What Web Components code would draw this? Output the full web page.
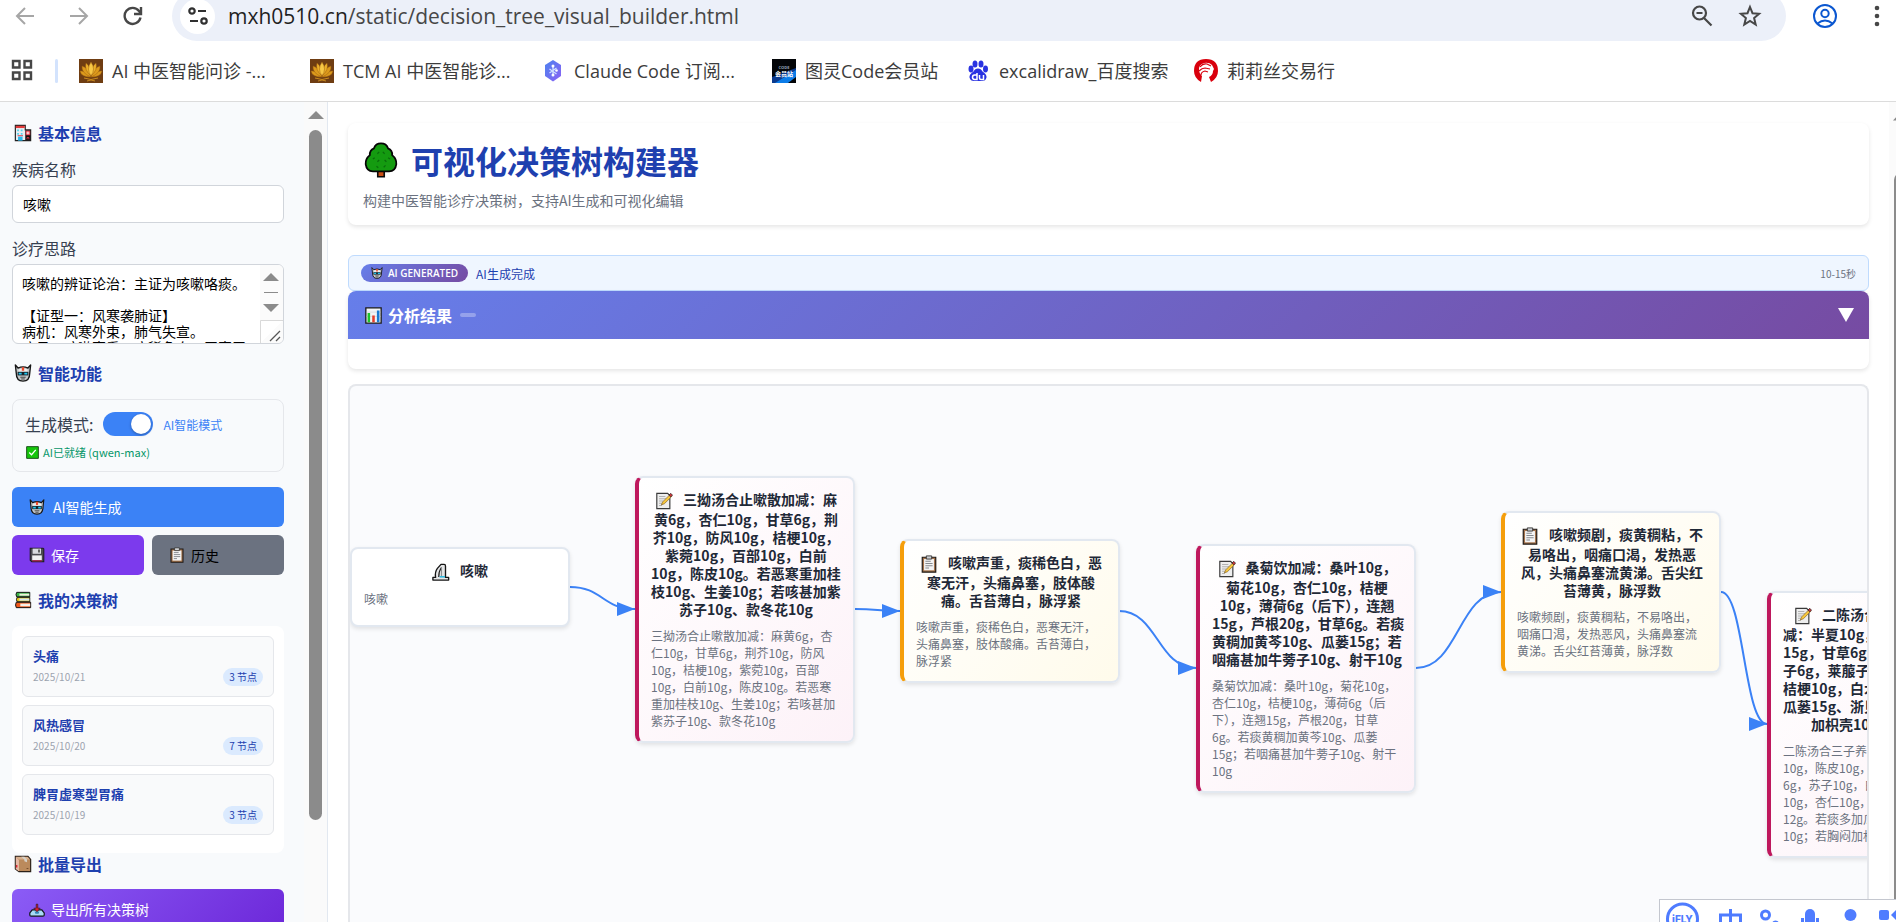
<!DOCTYPE html>
<html lang="zh-CN">
<head>
<meta charset="utf-8">
<title>可视化决策树构建器</title>
<style>
html,body{margin:0;height:100%}
body{font-family:"Noto Sans CJK SC",sans-serif;font-size:14px;background:#fff;color:#1f2937;overflow:hidden}
</style>
</head>
<body>
<app-root></app-root>
<script>
const define = (name, html, setup) => {
  const tpl = document.createElement('template');
  tpl.innerHTML = `<style>*{box-sizing:border-box}:host{display:block;box-sizing:border-box}</style>` + html;
  customElements.define(name, class extends HTMLElement {
    constructor() {
      super();
      this.attachShadow({mode: 'open'}).append(tpl.content.cloneNode(true));
    }
    connectedCallback() { if (setup && !this.ready) { this.ready = true; setup(this, this.shadowRoot); } }
  });
};

/* Icon set, each drawn on a 20 x 20 grid */
const ICONS = {
  hospital: `<path d="M1.500 1.500h11v5h6v12h-17z" fill="#e9eef2" stroke="#222" stroke-width="1.300"/><path d="M2 2h10v2.500h-10z" fill="#e23b3b"/><path d="M12.500 7h5.800v11h-5.800z" fill="#111"/><path d="M13 7.500h5v5h-5z" fill="#e23b4b"/><path d="M15.500 8.300v3.400M13.800 10h3.400" stroke="#fff"/><path d="M3.500 6h2v2h-2zM7.500 6h2v2h-2zM3.500 10h2v2h-2zM7.500 10h2v2h-2z" fill="#55d3ee"/><path d="M4.500 14h5v4.500h-5z" fill="#25b8ed"/><path d="M4 13h6M14.500 17v-2h2v2" stroke="#d34" fill="none"/>`,
  robot: `<path d="M1.500 1l3 3.500q5.500-2.500 11 0l3-3.500-1 9q0 9-7.500 9t-7.500-9z" fill="#c3c7c9" stroke="#161616" stroke-width="1.500" stroke-linejoin="round"/><path d="M5 6q5-2 10 0v2.500H5z" fill="#eceded"/><path d="M8.700 3.500h2.600v4h-2.600z" fill="#f04a2c"/><path d="M4 8.700h12v4H4z" fill="#15232b"/><path d="M5.200 9.600h3.300v2.200H5.200zM11.500 9.600h3.300v2.200h-3.300z" fill="#20c8f2"/><path d="M7 14.700h6M8 16.600h4" stroke="#333"/>`,
  check: `<path d="M1 1h18v18h-18z" fill="#16c60c" stroke="#1a4f1a" stroke-width="1.500"/><path d="M5 10l3.500 3.500 6.500-7.500" fill="none" stroke="#fff" stroke-width="2"/>`,
  floppy: `<path d="M1.500 1.500h16l1 1v16h-15l-2-2z" fill="#4b4b50" stroke="#1d1d1d" stroke-width="1.300"/><path d="M4.500 2h10.500v6.500h-10.500z" fill="#d8dade"/><path d="M11.500 3h2v4h-2z" fill="#444"/><path d="M4 10.500h12v6h-12z" fill="#f1f1f1"/><path d="M4 16.500h12v1.500h-12z" fill="#b3204d"/>`,
  clipboard: `<path d="M2.500 2.500h15v16.500h-15z" fill="#a5744c" stroke="#1f1a17" stroke-width="1.300"/><path d="M4.500 4.500h11v12.500h-11z" fill="#f4f4f4"/><path d="M7 1h6v3.500h-6z" fill="#cfd1d4" stroke="#333"/><path d="M6 7h6M6 9.500h8M6 12h8M6 14.500h4" stroke="#85898e" stroke-width="1.200"/>`,
  books: `<path d="M3 1.500h14.500v5h-14.500q-1.500-2.500 0-5z" fill="#39b54a" stroke="#111" stroke-width="1.100"/><path d="M6 3h11v2.200h-11z" fill="#f2efdc"/><path d="M3.500 7h14v5h-14q-1.500-2.500 0-5z" fill="#e2c71b" stroke="#111" stroke-width="1.100"/><path d="M6 8.300h11v2.400h-11z" fill="#d5e8f3"/><path d="M2.500 12.500h16v6h-16q-1.500-3 0-6z" fill="#f0581a" stroke="#111" stroke-width="1.100"/><path d="M7 14h11v3h-11z" fill="#f5f0e8"/>`,
  box: `<path d="M1.500 1.500h14l3 3.500v13.500h-13l-4-3z" fill="#bb8a5c" stroke="#2a2019" stroke-width="1.300"/><path d="M2 2h13l3 3h-12.500z" fill="#d9b18e"/><path d="M2 2l3.500 3.500v12.500l-3.500-2.500z" fill="#e5b9a4"/><path d="M8 2h3.500l3 3v3l-3-1v-2z" fill="#d7d2c9"/><path d="M3 11v3" stroke="#d23" stroke-width="1.500"/><path d="M14 15h2" stroke="#6d4828"/>`,
  inbox: `<path d="M4 11h12l3 4v2.500q0 1.500-1.500 1.500h-15q-1.500 0-1.500-1.500v-2.500z" fill="#a9dcf5" stroke="#10151a" stroke-width="1.500"/><path d="M7 13h6l-1 3h-4z" fill="#3686b9"/><path d="M9 4h2v5h3l-4 4.500-4-4.500h3z" fill="#e01f2d" stroke="#251116" stroke-width=".8"/>`,
  chart: `<path d="M1 1h18v18h-18z" fill="#f2f4f6" stroke="#161616" stroke-width="1.500"/><path d="M2 6h16M2 11h16" stroke="#d4d9de"/><path d="M3 7h3v11h-3z" fill="#1cc32a"/><path d="M8.500 10h3v8h-3z" fill="#e83e2b"/><path d="M14 4h3v14h-3z" fill="#187bd4"/>`,
  memo: `<path d="M2 1.500h12l2.500 2.500v14.500h-14.500z" fill="#eee" stroke="#3a3a3a" stroke-width="1.300"/><path d="M4.500 5h7M4.500 7.500h8M4.500 10h5M4.500 12.500h4M4.500 15h3" stroke="#a9a9a9"/><path d="M7 14.500l1.500-3.500 8-8 2 2-8 8z" fill="#f8c73a" stroke="#7a5a20" stroke-width=".7"/><path d="M15.500 3.500l2-2 2 2-2 2z" fill="#d0343b" stroke="#222" stroke-width=".8"/>`,
  boot: `<path d="M1 19v-3h3q-1-6 2-10l4-4.500h3.500q1.500 0 1.500 2V16h3.500v3z" fill="#e4e5e6" stroke="#151515" stroke-width="1.500" stroke-linejoin="round"/><path d="M10.500 5q-3 4-3 10.500" fill="none" stroke="#151515" stroke-width="1.300"/><path d="M10.500 5v10" fill="none" stroke="#8b8f92" stroke-width="1.300"/><path d="M8.500 14.500h6v1.700h-6z" fill="#29b7de"/>`,
  tree: `<path d="M8.200 15.500h3.600v3.800h-3.600z" fill="#c84e13" stroke="#0b0b0b" stroke-width=".9"/><path d="M10 .8q3 0 3.900 2.700 2.500 1 2.300 3.800 2.500 2 2.300 5-.5 4-4 4h-9q-3.500 0-4-4-.2-3 2.300-5-.2-2.800 2.300-3.800.9-2.700 3.900-2.700z" fill="#149b10" stroke="#060606" stroke-width="1"/><path d="M8 6.500l1-1M11 5.500l1 1M5.500 9.500l1-.8M9 10l-1 1M12 10l1 1M14 8.700l1 .8M7.500 13.500l1 .8M12.500 13l-1 1" stroke="#0a6d0c" stroke-width=".7"/>`,
};
define('app-icon', `<style>:host{display:inline-block;width:var(--size,18px);height:var(--size,18px);flex:none}svg{display:block;width:100%;height:100%}</style><svg viewBox="0 0 20 20" aria-hidden="true"></svg>`,
  (el, root) => { root.querySelector('svg').innerHTML = ICONS[el.getAttribute('name')]; });

/* ---------- browser chrome ---------- */
define('browser-toolbar', `<style>
:host{height:41px;overflow:hidden;display:flex;align-items:flex-end}
nav{display:flex;align-items:center;height:50px;width:100%;flex:none}
button{border:0;background:none;padding:0;width:24px;height:24px;display:grid;place-items:center}
svg{display:block}
.left{display:flex;gap:30px;padding:0 27px 0 13px}
.bar{flex:1;height:50px;border-radius:25px;background:#ecf0f9;display:flex;align-items:center;padding:0 24px 0 8px;min-width:0}
.site{width:35px;height:35px;border-radius:50%;background:#fff}
.url{flex:1;margin-left:13px;font:21px/28px "Open Sans",sans-serif;color:#474747;white-space:nowrap}
.url b{font-weight:400;color:#1f1f1f}
.in{display:flex;gap:24px}
.right{display:flex;gap:28px;padding:0 7px 0 27px}
</style>
<nav><div class="left">
<button aria-label="后退"><svg width="20" height="20" viewBox="0 0 20 20" fill="none" stroke="#a6a6a6" stroke-width="2"><path d="M19 10H2.500M10 2l-8 8 8 8"/></svg></button>
<button aria-label="前进"><svg width="20" height="20" viewBox="0 0 20 20" fill="none" stroke="#a6a6a6" stroke-width="2"><path d="M1 10h16.500M10 2l8 8-8 8"/></svg></button>
<button aria-label="刷新"><svg width="20" height="20" viewBox="0 0 20 20" fill="none" stroke="#474747" stroke-width="2.400"><path d="M17.500 11.500a8 8 0 1 1-1.500-6.500l1.500 2.500"/><path d="M18 1v7h-7"/></svg></button>
</div>
<div class="bar"><button class="site" aria-label="网站信息"><svg width="20" height="18" viewBox="0 0 20 18" fill="none" stroke="#303030" stroke-width="2.200"><circle cx="4" cy="4" r="2.700"/><path d="M10 4h8M2 14h8"/><circle cx="16" cy="14" r="2.700"/></svg></button>
<span class="url"><b>mxh0510.cn</b>/static/decision_tree_visual_builder.html</span>
<div class="in"><button aria-label="缩放"><svg width="22" height="22" viewBox="0 0 22 22" fill="none" stroke="#474747" stroke-width="2.200"><circle cx="8.500" cy="8" r="6.500"/><path d="M5.500 8h6M13 13l7.500 7.500"/></svg></button>
<button aria-label="收藏"><svg width="24" height="24" viewBox="0 0 24 24" fill="none" stroke="#474747" stroke-width="2"><path d="M12 3l2.500 6.200 6.600.5-5 4.300 1.600 6.500-5.700-3.500-5.700 3.500 1.600-6.500-5-4.300 6.600-.5z"/></svg></button></div></div>
<div class="right"><button aria-label="用户"><svg width="24" height="24" viewBox="0 0 24 24" fill="none" stroke="#0b57d0" stroke-width="2"><circle cx="12" cy="12" r="11"/><circle cx="12" cy="9.500" r="3.700"/><path d="M4.500 19.500q7.500-6 15 0"/></svg></button>
<button aria-label="菜单"><svg width="6" height="24" viewBox="0 0 6 24" fill="#474747"><circle cx="3" cy="4" r="2.300"/><circle cx="3" cy="12" r="2.300"/><circle cx="3" cy="20" r="2.300"/></svg></button></div></nav>`);

const LOTUS = `<path d="M0 0h24v24H0z" fill="#6f3d12"/><g fill="#dc9a1c" stroke="#9a5d10" stroke-width=".5"><path d="M12 18q-10 0-11-6 5-1 11 6zM12 18q10 0 11-6-5-1-11 6z"/><path d="M12 18Q2 14 3 7q7 2 9 11zM12 18q10-4 9-11-7 2-9 11z"/><path d="M12 17Q5 11 7 4q5 4 5 13zM12 17q7-6 5-13-5 4-5 13z" fill="#ecb02a"/><path d="M12 17q-5-7 0-14 5 7 0 14z" fill="#f8c845"/></g><path d="M5 19q7 3 14 0M8 22q4-2 8 0" stroke="#c98a1e" fill="none"/>`;
const SITE = {
  lotus: LOTUS,
  hex: `<defs><linearGradient id="g" x2="1" y2="1"><stop stop-color="#4c83ee"/><stop offset="1" stop-color="#8a62f5"/></linearGradient></defs><path d="M12 1l8 5v11l-8 5.500-8-5.500V6z" fill="url(#g)"/><path d="M12 7v9M8.500 10l7 5M15.500 9l-7 5" stroke="#cfe0ff" stroke-width="1.300"/><circle cx="12" cy="7" r="1.500" fill="#fff"/><circle cx="12" cy="16" r="1.500" fill="#fff"/><circle cx="15.500" cy="11.500" r="1.300" fill="#fff"/>`,
  turing: `<path d="M0 0h24v24H0z" fill="#030508"/><path d="M0 24l24-14v8l-8 6z" fill="#0c7ce8"/><path d="M0 18l24-9v2L3 24H0z" fill="#0a3a8e"/><text x="12" y="10" font-size="4" font-weight="700" text-anchor="middle" fill="#9ab">CODE</text><text x="12" y="17" font-size="6" font-weight="700" text-anchor="middle" fill="#fff">会员站</text>`,
  baidu: `<g fill="#2932e1"><ellipse cx="5" cy="10" rx="2.500" ry="3.400"/><ellipse cx="9" cy="5" rx="2.500" ry="3.500"/><ellipse cx="15" cy="5" rx="2.500" ry="3.500"/><ellipse cx="19.500" cy="10" rx="2.500" ry="3.400"/><path d="M12 9.500q3 0 4.500 3 4.500 3 4 6-.8 3.500-4.500 3.500h-8q-3.700 0-4.500-3.500-.5-3 4-6 1.500-3 4.500-3z"/></g><path d="M11 14v6.500h-2.500q-2-.3-2-2.300t2-2.200h2M13.500 16v3q0 1.500 1.500 1.500h2.500V16" stroke="#fff" stroke-width="1.500" fill="none"/>`,
  lily: `<path d="M7 23Q0 19 0 12 0 0 12 0t12 12q0 7-7 11l-2-5q4-2 4-6l1-2-2-4q-3-3-8-2-6 2-5 8 1 4 3 5z" fill="#d9000d"/><path d="M6 8q3-4 7-3l4 2M5 12q3-3 6-3l5 1M7 16q0-3 4-4l3 1" stroke="#d9000d" stroke-width="1.200" fill="none"/>`,
};
define('bookmark-item', `<style>
:host{display:block;flex:none}a{display:flex;align-items:center;gap:9px;color:#3c3c3c;text-decoration:none;font:18px/26px "Open Sans","Noto Sans CJK SC",sans-serif;white-space:nowrap}
svg{width:24px;height:24px;flex:none}</style><a href="#"><svg viewBox="0 0 24 24" aria-hidden="true"></svg><span><slot></slot></span></a>`,
  (el, root) => { root.querySelector('svg').innerHTML = SITE[el.getAttribute('site')]; });

define('bookmark-bar', `<style>
:host{height:61px;display:flex;align-items:center;border-bottom:1px solid #dcdcdc;padding:0 11px}
button{border:0;background:none;padding:0;width:22px;height:24px}
i{width:3px;height:24px;border-radius:2px;background:#d3e3fd;margin:0 21px 0 22px}
nav{display:flex}.w{width:231px}.m{width:194px}.l{width:228px}
</style>
<button aria-label="应用"><svg width="22" height="22" viewBox="0 0 22 22" fill="none" stroke="#474747" stroke-width="2.400"><path d="M2 2h6.500v6.500H2zM13.500 2H20v6.500h-6.500zM2 13.500h6.500V20H2zM13.500 13.500H20V20h-6.500z"/></svg></button><i></i>
<nav><bookmark-item class="w" site="lotus">AI 中医智能问诊 -...</bookmark-item><bookmark-item class="w" site="lotus">TCM AI 中医智能诊...</bookmark-item><bookmark-item class="w" site="hex">Claude Code 订阅...</bookmark-item><bookmark-item class="m" site="turing">图灵Code会员站</bookmark-item><bookmark-item class="l" site="baidu">excalidraw_百度搜索</bookmark-item><bookmark-item site="lily">莉莉丝交易行</bookmark-item></nav>`);

/* ---------- sidebar ---------- */
define('section-title', `<style>:host{--size:18px}h2{margin:0;display:flex;align-items:center;gap:6px;padding-left:2px;font-size:16px;line-height:24px;font-weight:700;color:#1e40af}</style><h2><app-icon></app-icon><slot></slot></h2>`,
  (el, root) => { const i = document.createElement('app-icon'); i.setAttribute('name', el.getAttribute('icon')); root.querySelector('app-icon').replaceWith(i); });

define('action-button', `<style>:host{--size:16px}
button{width:100%;height:40px;border:0;border-radius:6px;padding:0 17px;display:flex;align-items:center;gap:var(--gap,6px);font:400 14px/20px "Noto Sans CJK SC",sans-serif;color:var(--ink,#fff);background:var(--fill,#3b82f6);white-space:nowrap}</style><button><slot name="icon"></slot><span><slot></slot></span></button>`);

define('tree-item', `<style>
article{height:61px;border:1px solid #e5e7eb;border-radius:6px;background:#f9fafb;padding:9px 10px}
h3{margin:0;font-size:13px;line-height:20px;font-weight:700;color:#1e40af}
div{display:flex;justify-content:space-between;align-items:center;margin-top:2px}
time{font-size:10px;line-height:16px;color:#9ca3af}
span{font-size:10px;line-height:18px;padding:0 6px;border-radius:9px;background:#dbeafe;color:#1e40af}
</style><article><h3><slot></slot></h3><div><time></time><span></span></div></article>`,
  (el, root) => { root.querySelector('time').textContent = el.getAttribute('date'); root.querySelector('span').textContent = el.getAttribute('nodes') + ' 节点'; });

define('tool-sidebar', `<style>
:host{width:328px;flex:none;display:flex;background:#f8fafc;border-right:1px solid #e2e8f0;overflow:hidden}
.body{flex:1;padding:19px 20px 0 12px;display:flex;flex-direction:column}
.body>*{flex-shrink:0}
.track{width:23px;background:#fafafa;display:flex;flex-direction:column;align-items:center;padding-top:9px}
.track svg{flex:none}
.track i{width:13px;height:690px;flex:none;border-radius:7px;background:#8b8b8b;margin-top:11px}
label{font-size:16px;line-height:24px;color:#374151}
.field{display:flex;flex-direction:column;gap:4px}
.a{margin-top:12px}.b{margin-top:13px}
input[type=text]{height:38px;width:100%;border:1px solid #d1d5db;border-radius:6px;background:#fff;padding:0 10px;font:14px/20px "Noto Sans CJK SC",sans-serif;color:#000;outline:0}
.area{height:80px;border:1px solid #d1d5db;border-radius:6px;background:#fff;display:flex;overflow:hidden}
textarea{flex:1;min-width:0;border:0;resize:none;outline:0;overflow:hidden;background:none;padding:10px 0 0 9px;font:14px/16px "Noto Sans CJK SC",monospace;color:#000;white-space:pre}
.area svg{flex:none;width:23px;height:78px}
section-title{margin-top:17px}section-title.first{margin-top:0}
.mode{margin-top:14px;height:73px;border:1px solid #e5e7eb;border-radius:8px;padding:12px 12px 0;display:flex;flex-direction:column;gap:8px}
.row{display:flex;align-items:center;gap:10px;height:24px}
.row span{font-size:12px;color:#3b82f6}
.mode p{--size:13px;margin:0;display:flex;align-items:center;gap:4px;font-size:11px;line-height:16px;color:#059669;padding-left:1px}
input[type=checkbox]{appearance:none;margin:0;width:50px;height:24px;border-radius:12px;background:#3b82f6;display:flex;align-items:center;justify-content:flex-end;padding:2px}
input[type=checkbox]::before{content:"";width:20px;height:20px;border-radius:50%;background:#fff;box-shadow:0 1px 3px rgba(0,0,0,.3)}
.gen{--gap:8px;margin-top:15px}.two{margin-top:8px;display:grid;grid-template-columns:1fr 1fr;gap:8px}
.mid{margin-top:13px}.list{margin-top:14px;padding:10px 10px 18px;background:#fff;border-radius:8px;display:flex;flex-direction:column;gap:8px}
.last{margin-top:-1px}.exp{margin-top:13px}
</style>
<div class="body">
<section-title class="first" icon="hospital">基本信息</section-title>
<div class="field a"><label for="name">疾病名称</label><input id="name" type="text" value="咳嗽"></div>
<div class="field b"><label for="idea">诊疗思路</label><div class="area"><textarea id="idea">咳嗽的辨证论治：主证为咳嗽咯痰。

【证型一：风寒袭肺证】
病机：风寒外束，肺气失宣。
症见：咳嗽声重，痰稀色白，恶寒无</textarea><svg viewBox="0 0 23 78" aria-hidden="true"><path d="M0 0h23v78H0z" fill="#fbfbfb"/><path d="M3 16l8-8 8 8zM3 39h16l-8 8z" fill="#8b8b8b"/><path d="M4 27.500h14" stroke="#8b8b8b"/><path d="M.5 78V55.500H23" fill="#fff" stroke="#d9d9d9"/><path d="M10 76l10-10M16 76l4-4" stroke="#555" stroke-width="1.300"/></svg></div></div>
<section-title icon="robot">智能功能</section-title>
<div class="mode"><div class="row"><label for="mode">生成模式:</label><input id="mode" type="checkbox" checked><span>AI智能模式</span></div><p><app-icon name="check"></app-icon>AI已就绪 (qwen-max)</p></div>
<action-button class="gen"><app-icon slot="icon" name="robot"></app-icon>AI智能生成</action-button>
<div class="two"><action-button style="--fill:#7c3aed"><app-icon slot="icon" name="floppy"></app-icon>保存</action-button><action-button style="--fill:#6b7280;--ink:#000"><app-icon slot="icon" name="clipboard"></app-icon>历史</action-button></div>
<section-title class="mid" icon="books">我的决策树</section-title>
<div class="list"><tree-item date="2025/10/21" nodes="3">头痛</tree-item><tree-item date="2025/10/20" nodes="7">风热感冒</tree-item><tree-item date="2025/10/19" nodes="3">脾胃虚寒型胃痛</tree-item></div>
<section-title class="last" icon="box">批量导出</section-title>
<action-button class="exp" style="--fill:linear-gradient(135deg,#8b5cf6,#6d28d9)"><app-icon slot="icon" name="inbox"></app-icon>导出所有决策树</action-button>
</div>
<div class="track"><svg width="16" height="8" viewBox="0 0 16 8"><path d="M0 8l8-8 8 8z" fill="#8b8b8b"/></svg><i></i></div>`);

/* ---------- main column ---------- */
define('page-header', `<style>
:host{--size:36px;border-radius:8px;background:#fff;box-shadow:0 2px 4px rgba(0,0,0,.1);padding:17px 15px 15px}
h1{margin:0;display:flex;align-items:center;gap:12px;font-size:32px;line-height:40px;font-weight:700;color:#1e40af}
p{margin:10px 0 0;font-size:14px;line-height:20px;color:#6b7280}</style>
<h1><app-icon name="tree"></app-icon><slot></slot></h1><p><slot name="sub"></slot></p>`);

define('status-bar', `<style>
:host{--size:12px;display:flex;align-items:center;gap:8px;height:36px;padding:0 12px;border:1px solid #bfdbfe;border-radius:6px;background:#eff6ff;font-size:12px;color:#1e40af}
b{display:flex;align-items:center;gap:5px;height:18px;padding:0 10px;border-radius:9px;background:linear-gradient(135deg,#667eea,#764ba2);color:#fff;font:600 10px/18px "Open Sans",sans-serif}
span{margin-left:auto;font-size:10px;color:#6b7280}</style>
<b><app-icon name="robot"></app-icon>AI GENERATED</b><slot></slot><span>10-15秒</span>`);

define('result-panel', `<style>
:host{--size:17px;border-radius:8px;overflow:hidden;background:#fff;box-shadow:0 2px 4px rgba(0,0,0,.1);padding-bottom:30px}
header{height:48px;display:flex;align-items:center;padding:0 15px 0 17px;background:linear-gradient(135deg,#667eea,#764ba2);color:#fff}
h2{margin:0;font-size:16px;line-height:24px;font-weight:700;padding-left:6px}
i{width:16px;height:4px;border-radius:2px;background:rgba(255,255,255,.3);margin-left:8px}
button{margin-left:auto;border:0;background:none;padding:0;width:16px;height:14px}svg{display:block}</style>
<header><app-icon name="chart"></app-icon><h2><slot></slot></h2><i></i><button aria-label="展开"><svg width="16" height="14" viewBox="0 0 16 14"><path d="M0 0h16L8 14z" fill="#fff"/></svg></button></header>`);

define('flow-node', `<style>
:host{--size:18px;width:220px;min-height:80px;border:2px solid #e2e8f0;border-radius:8px;background:#fff;padding:12px;box-shadow:0 2px 4px rgba(0,0,0,.1)}
:host([kind=rx]){border-left:4px solid #be185d;background:linear-gradient(135deg,#fff,#fdf2f8)}
:host([kind=sign]){border-left:4px solid #f59e0b;background:linear-gradient(135deg,#fff,#fffbeb)}
h3{margin:0 0 9px;font-size:14px;line-height:18px;font-weight:700;text-align:center;white-space:pre;color:#1f2937}
h3 app-icon{vertical-align:-5px;margin-right:10px}
p{margin:0;font-size:12px;line-height:17px;white-space:pre;color:#6b7280}
</style><h3></h3><p></p>`, (el, root) => {
  const icon = document.createElement('app-icon');
  icon.setAttribute('name', el.data.icon);
  root.querySelector('h3').append(icon, el.data.title);
  root.querySelector('p').textContent = el.data.text;
});

const NODES = [
 {x:0,y:161,icon:'boot',title:'咳嗽',text:'咳嗽'},
 {x:285,y:90,kind:'rx',icon:'memo',
  title:'三拗汤合止嗽散加减：麻\n黄6g，杏仁10g，甘草6g，荆\n芥10g，防风10g，桔梗10g，\n紫菀10g，百部10g，白前\n10g，陈皮10g。若恶寒重加桂\n枝10g、生姜10g；若咳甚加紫\n苏子10g、款冬花10g',
  text:'三拗汤合止嗽散加减：麻黄6g，杏\n仁10g，甘草6g，荆芥10g，防风\n10g，桔梗10g，紫菀10g，百部\n10g，白前10g，陈皮10g。若恶寒\n重加桂枝10g、生姜10g；若咳甚加\n紫苏子10g、款冬花10g'},
 {x:550,y:153,kind:'sign',icon:'clipboard',
  title:'咳嗽声重，痰稀色白，恶\n寒无汗，头痛鼻塞，肢体酸\n痛。舌苔薄白，脉浮紧',
  text:'咳嗽声重，痰稀色白，恶寒无汗，\n头痛鼻塞，肢体酸痛。舌苔薄白，\n脉浮紧'},
 {x:846,y:158,kind:'rx',icon:'memo',
  title:'桑菊饮加减：桑叶10g，\n菊花10g，杏仁10g，桔梗\n10g，薄荷6g（后下），连翘\n15g，芦根20g，甘草6g。若痰\n黄稠加黄芩10g、瓜蒌15g；若\n咽痛甚加牛蒡子10g、射干10g',
  text:'桑菊饮加减：桑叶10g，菊花10g，\n杏仁10g，桔梗10g，薄荷6g（后\n下），连翘15g，芦根20g，甘草\n6g。若痰黄稠加黄芩10g、瓜蒌\n15g；若咽痛甚加牛蒡子10g、射干\n10g'},
 {x:1151,y:125,kind:'sign',icon:'clipboard',
  title:'咳嗽频剧，痰黄稠粘，不\n易咯出，咽痛口渴，发热恶\n风，头痛鼻塞流黄涕。舌尖红\n苔薄黄，脉浮数',
  text:'咳嗽频剧，痰黄稠粘，不易咯出，\n咽痛口渴，发热恶风，头痛鼻塞流\n黄涕。舌尖红苔薄黄，脉浮数'},
 {x:1417,y:205,kind:'rx',icon:'memo',
  title:'二陈汤合三子养亲汤加\n减：半夏10g，陈皮10g，茯苓\n15g，甘草6g，苏子10g，白芥\n子6g，莱菔子10g，杏仁10g，\n桔梗10g，白术12g。若痰多加\n瓜蒌15g、浙贝10g；若胸闷甚\n加枳壳10g、厚朴10g',
  text:'二陈汤合三子养亲汤加减：半夏\n10g，陈皮10g，茯苓15g，甘草\n6g，苏子10g，白芥子6g，莱菔子\n10g，杏仁10g，桔梗10g，白术\n12g。若痰多加瓜蒌15g、浙贝\n10g；若胸闷加枳壳10g、厚朴10g'},
];
const LINKS = [[220,201,285,223],[505,223,550,225],[769,225,846,282],[1066,282,1151,206],[1371,206,1417,338]];
define('flow-canvas', `<style>
:host{position:relative;flex:1;min-height:0;overflow:hidden;border:2px solid #e5e7eb;border-bottom:0;border-radius:8px 8px 0 0;background:#fafbfd}
svg{position:absolute;inset:0;width:100%;height:100%}
flow-node{position:absolute}
</style><svg aria-hidden="true" fill="none" stroke="#3b82f6" stroke-width="2"></svg>`, (el, root) => {
  root.querySelector('svg').innerHTML = LINKS.map(([a, b, c, d]) => {
    const m = (a + c) / 2;
    return `<path d="M${a} ${b}C${m} ${b} ${m} ${d} ${c} ${d}"/><path d="M${c - 18} ${d - 7}L${c} ${d}L${c - 18} ${d + 7}z" fill="#3b82f6" stroke="none"/>`;
  }).join('');
  for (const n of NODES) {
    const node = document.createElement('flow-node');
    node.data = n;
    if (n.kind) node.setAttribute('kind', n.kind);
    node.style.left = n.x + 'px';
    node.style.top = n.y + 'px';
    root.append(node);
  }
});

define('builder-main', `<style>
:host{flex:1;min-width:0;display:flex;background:#fff}
main{flex:1;min-width:0;display:flex;flex-direction:column;padding:21px 20px 0 20px}
status-bar{margin-top:30px}flow-canvas{margin-top:15px}
.track{width:7px;background:#fbfbfb;overflow:hidden;padding:14px 0 0 4px}
.track svg{display:block}
.track i{display:block;width:13px;height:100%;margin:49px 0 0 1px;border-radius:7px 0 0 0;background:#8b8b8b}
</style><main><page-header>可视化决策树构建器<span slot="sub">构建中医智能诊疗决策树，支持AI生成和可视化编辑</span></page-header>
<status-bar>AI生成完成</status-bar><result-panel>分析结果</result-panel><flow-canvas></flow-canvas></main>
<div class="track"><svg width="16" height="8" viewBox="0 0 16 8"><path d="M0 4.500L8-4v8.500z" fill="#8b8b8b"/></svg><i></i></div>`);

define('ime-bar', `<style>:host{position:fixed;right:0;bottom:0;width:237px;height:23px;border:1px solid #c4c7cf;border-width:1px 0 0 1px;background:#fff;overflow:hidden}svg{display:block}</style>
<svg width="236" height="40" viewBox="0 0 236 40" fill="none" stroke="#4f7cff" stroke-width="3"><circle cx="22.500" cy="19" r="15"/><text x="22.500" y="23" text-anchor="middle" font-family="Inter,sans-serif" font-weight="800" font-size="10" fill="#4f7cff" stroke="none">iFLY</text><path d="M60.500 28V15h20v13M70.500 9v26M60 26h21"/><circle cx="105.500" cy="15" r="4"/><g fill="#4f7cff" stroke="none"><circle cx="115.500" cy="24" r="3.500"/><rect x="145" y="9" width="10" height="22" rx="5"/><circle cx="190.500" cy="15" r="6"/><rect x="219" y="10" width="10" height="10" rx="2"/><path d="M231 15l6-6 6 6-6 6z"/></g><path d="M142.500 18v5q0 5 7.500 5t7.500-5v-5"/></svg>`);

define('app-root', `<style>:host{height:100vh;display:flex;flex-direction:column}div{flex:1;min-height:0;display:flex}</style>
<browser-toolbar></browser-toolbar><bookmark-bar></bookmark-bar><div><tool-sidebar></tool-sidebar><builder-main></builder-main></div><ime-bar></ime-bar>`);
</script>
</body>
</html>
